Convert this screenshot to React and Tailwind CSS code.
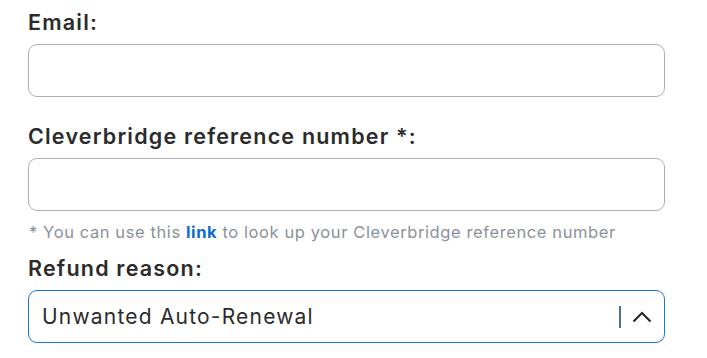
import React from 'react';

const font = { fontFamily: 'Inter, "DejaVu Sans", sans-serif' };

const Field = ({ label, children }) => (
  <div className="flex flex-col">
    <label className="text-[21.5px] leading-[28px] font-semibold tracking-[1.2px] text-[#2b2b2b] mb-[8px]">{label}</label>
    {children}
  </div>
);

const App = () => {
  return (
    <div className="bg-white w-[707px] h-[358px] overflow-hidden pl-[28px] pt-[8px]" style={font}>
      <div className="w-[637px] flex flex-col">
        <Field label="Email:">
          <input className="h-[53px] rounded-[9px] border border-[#aab1b9] px-3 outline-none" />
        </Field>

        <div className="mt-[25px]">
          <Field label="Cleverbridge reference number *:">
            <input className="h-[53px] rounded-[9px] border border-[#aab1b9] px-3 outline-none" />
          </Field>
          <p className="text-[16.5px] leading-[22px] tracking-[0.6px] text-[#8b929a] mt-[10px] pl-[1px]">
            * You can use this{' '}
            <a href="#" className="text-[#0b6bd3] font-bold">link</a>{' '}
            to look up your Cleverbridge reference number
          </p>
        </div>

        <div className="mt-[11px]">
          <Field label="Refund reason:">
            <div className="h-[53px] rounded-[9px] border border-[#1a74db] flex items-center pl-[13px] pr-[12px]">
              <span className="flex-1 text-[21px] tracking-[1.2px] text-[#2b2b2b]">Unwanted Auto-Renewal</span>
              <span className="w-[2px] h-[22px] bg-[#4d6f96] mr-[11px]" />
              <svg width="20" height="12" viewBox="0 0 20 12" fill="none">
                <path d="M1.5 10.5 L10 2 L18.5 10.5" stroke="#2b2b2b" strokeWidth="2.2" />
              </svg>
            </div>
          </Field>
        </div>
      </div>
    </div>
  );
};

export default App;
